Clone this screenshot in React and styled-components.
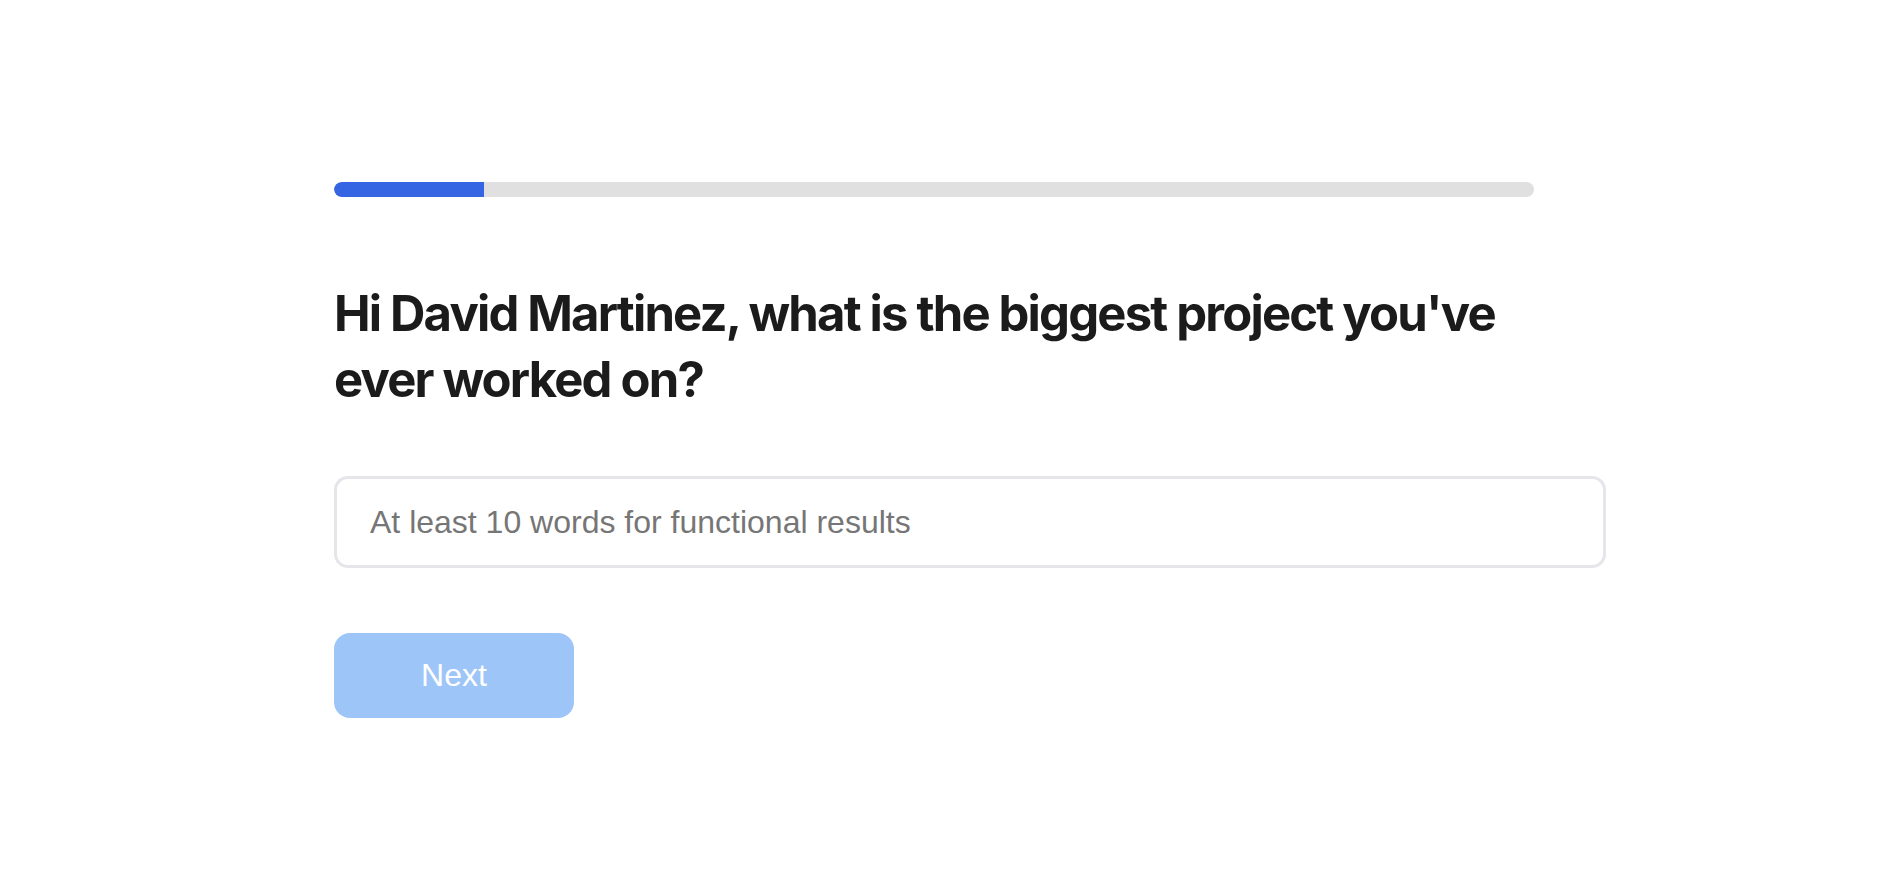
import React from "react";
import styled, { createGlobalStyle } from "styled-components";

const Global = createGlobalStyle`
  html, body { margin: 0; padding: 0; background: #ffffff; }
  body { font-family: Inter, "Liberation Sans", Arial, sans-serif; }
`;

const Page = styled.main`
  padding: 182px 0 0 334px;
  display: flex;
  flex-direction: column;
  align-items: flex-start;
`;

const Track = styled.div`
  width: 1200px;
  height: 15px;
  border-radius: 8px;
  background: #e0e0e0;
  overflow: hidden;
`;

const Fill = styled.div`
  height: 100%;
  background: #3565e3;
  border-radius: 8px 0 0 8px;
`;

const Question = styled.h1`
  margin: 84px 0 0 0;
  width: 1200px;
  font-family: Inter, "Liberation Sans", sans-serif;
  font-weight: 700;
  font-size: 49px;
  line-height: 66px;
  color: #1b1b1b;
  letter-spacing: -1.82px;
`;

const Answer = styled.input`
  box-sizing: border-box;
  margin-top: 63px;
  width: 1272px;
  height: 92px;
  border: 3px solid #e5e5ea;
  border-radius: 14px;
  padding: 0 33px;
  font-family: "Liberation Sans", Arial, sans-serif;
  font-size: 32px;
  color: #333;
  outline: none;
  &::placeholder { color: #767676; }
`;

const NextButton = styled.button`
  margin-top: 65px;
  width: 240px;
  height: 85px;
  border: none;
  border-radius: 16px;
  background: #9ec5f8;
  color: #ffffff;
  font-family: "Liberation Sans", Arial, sans-serif;
  font-size: 32px;
  cursor: not-allowed;
`;

export default function App() {
  const progress = 12.5;
  return (
    <>
      <Global />
      <Page>
        <Track>
          <Fill style={{ width: `${progress}%` }} />
        </Track>
        <Question>
          Hi David Martinez, what is the biggest project you've ever worked on?
        </Question>
        <Answer placeholder="At least 10 words for functional results" />
        <NextButton disabled>Next</NextButton>
      </Page>
    </>
  );
}
